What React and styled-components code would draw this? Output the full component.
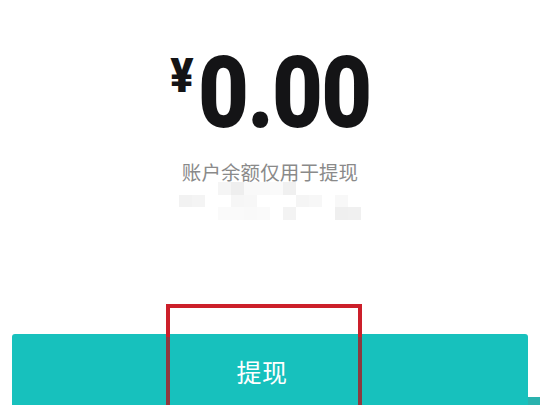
import React from "react";
import styled, { createGlobalStyle } from "styled-components";

const Global = createGlobalStyle`
  html, body { margin: 0; padding: 0; background: #ffffff; }
  #root { width: 540px; height: 405px; overflow: hidden; }
`;

const Page = styled.div`
  position: relative;
  width: 540px;
  height: 405px;
  overflow: hidden;
  background: #ffffff;
  display: flex;
  flex-direction: column;
  align-items: center;
  padding-top: 42px;
  box-sizing: border-box;
  font-family: Roboto, "Noto Sans CJK SC", sans-serif;
`;

const AmountRow = styled.div`
  display: flex;
  align-items: flex-start;
  justify-content: center;
  height: 102px;
  padding-left: 2px;
`;

const Yen = styled.span`
  display: inline-block;
  font-family: Roboto, "Liberation Sans", sans-serif;
  font-weight: 900;
  font-size: 48px;
  line-height: 1;
  color: #141416;
  margin-top: 10px;
  margin-right: 3px;
  transform: scaleX(0.9);
`;

const Digits = styled.span`
  display: inline-block;
  font-family: Roboto, "Liberation Sans", sans-serif;
  font-weight: 900;
  font-size: 101px;
  line-height: 1;
  color: #141416;
  letter-spacing: -2px;
  transform: scaleX(0.87);
  transform-origin: left center;
  margin-right: -24px;
`;

const Caption = styled.div`
  margin-top: 19px;
  font-family: "Noto Sans CJK SC", sans-serif;
  font-size: 19.5px;
  line-height: 19px;
  color: #8a8a8a;
  letter-spacing: 0.1px;
`;

const Mosaic = styled.div`
  display: grid;
  grid-template-columns: repeat(14, 13px);
  grid-template-rows: repeat(3, 12.7px);
  margin-top: 1px;
`;

const Cell = styled.div`
  background: ${(p) => p.$c};
  grid-column: ${(p) => p.$col + 1};
  grid-row: ${(p) => p.$row + 1};
`;

const Spacer = styled.div`
  min-height: 114px;
`;

const ButtonWrap = styled.div`
  position: relative;
  width: 540px;
  display: flex;
  align-items: flex-start;
`;

const WithdrawButton = styled.button`
  margin-left: 12px;
  width: 516px;
  height: 90px;
  border: none;
  border-radius: 3px 3px 0 0;
  background: #17c1bd;
  color: #ffffff;
  font-family: "Noto Sans CJK SC", sans-serif;
  font-size: 25px;
  letter-spacing: 0.5px;
  display: flex;
  justify-content: center;
  align-items: flex-start;
  padding: 19px 16px 0 0;
  box-sizing: border-box;
`;

const EdgeStrip = styled.div`
  margin-top: 63px;
  width: 12px;
  height: 20px;
  background: #2ab2ae;
`;

const Highlight = styled.div`
  position: absolute;
  left: 166px;
  top: -30px;
  width: 196px;
  height: 140px;
  box-sizing: border-box;
  border: 4px solid transparent;
  border-bottom: none;
  border-image: linear-gradient(to bottom, #cc1f2a 0, #cc1f2a 30px, #8c3a40 30px, #8c3a40 100%) 1;
  pointer-events: none;
`;

const cells = [
  [3, 0, "#f5f5f5"], [4, 0, "#eeeeee"], [5, 0, "#f9f9f9"], [6, 0, "#f9f9f9"], [7, 0, "#fafafa"], [8, 0, "#f0f0f0"],
  [0, 1, "#f2f2f2"], [1, 1, "#f4f4f4"], [4, 1, "#f6f6f6"], [5, 1, "#f7f7f7"], [9, 1, "#f5f5f5"], [10, 1, "#f7f7f7"], [12, 1, "#f8f8f8"],
  [3, 2, "#fafafa"], [4, 2, "#fafafa"], [5, 2, "#f9f9f9"], [6, 2, "#fafafa"], [8, 2, "#f3f3f3"], [12, 2, "#efefef"], [13, 2, "#f0f0f0"],
];

export default function App() {
  return (
    <>
      <Global />
      <Page>
        <AmountRow>
          <Yen>¥</Yen>
          <Digits>0.00</Digits>
        </AmountRow>
        <Caption>账户余额仅用于提现</Caption>
        <Mosaic>
          {cells.map(([c, r, col], i) => (
            <Cell key={i} $col={c} $row={r} $c={col} />
          ))}
        </Mosaic>
        <Spacer />
        <ButtonWrap>
          <WithdrawButton>提现</WithdrawButton>
          <EdgeStrip />
          <Highlight />
        </ButtonWrap>
      </Page>
    </>
  );
}
